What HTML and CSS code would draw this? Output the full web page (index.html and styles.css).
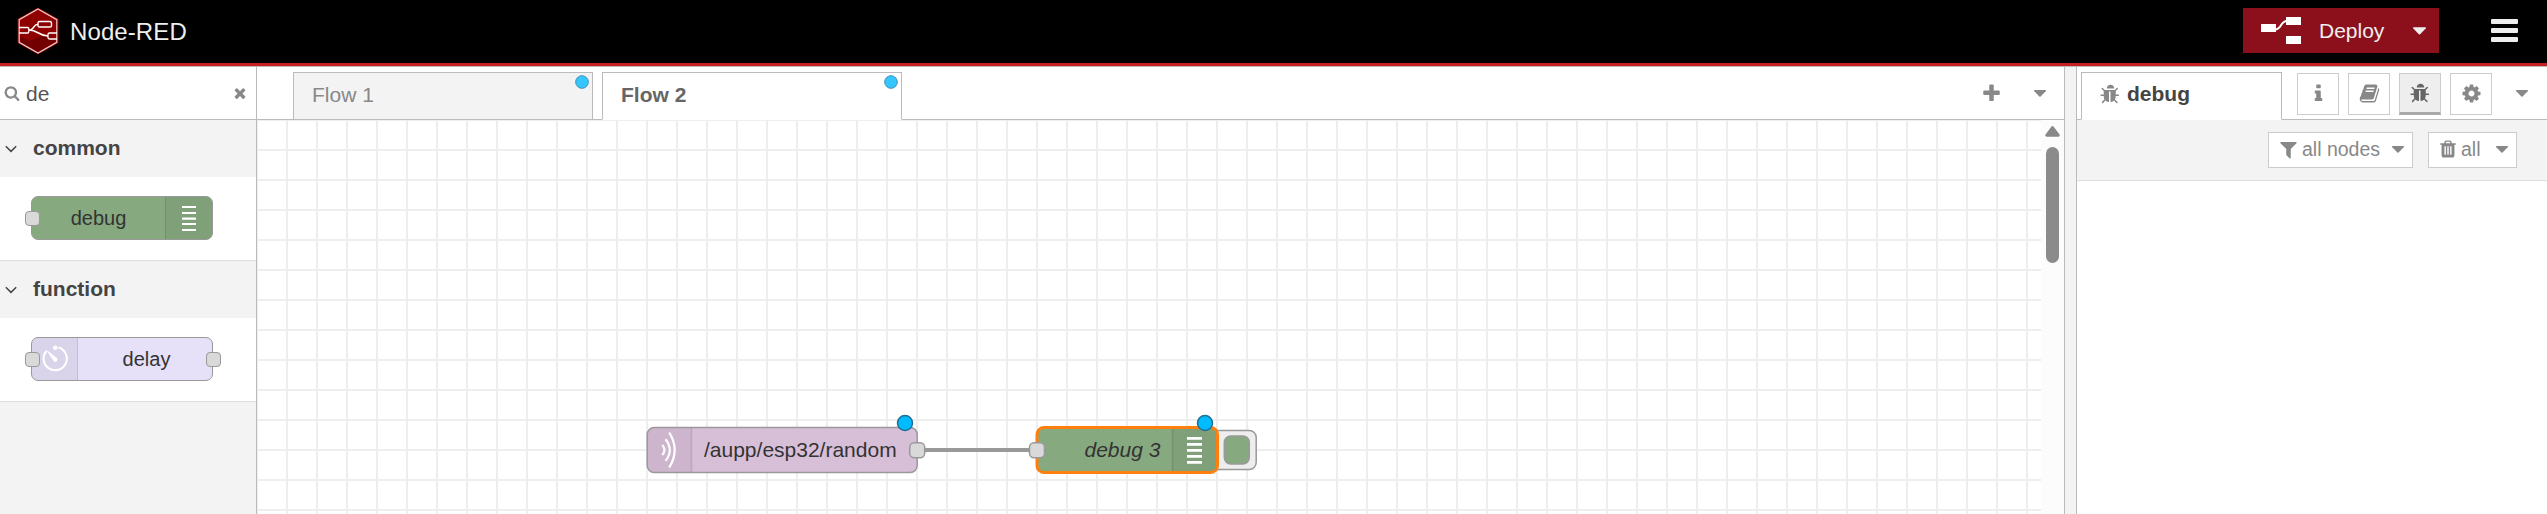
FILE: index.html
```html
<!DOCTYPE html>
<html lang="en">
<head>
<meta charset="utf-8">
<title>Node-RED</title>
<link rel="stylesheet" href="styles.css">
</head>
<body>
<svg class="defs" width="0" height="0">
  <symbol id="bug" viewBox="0 0 1792 1792"><path d="M1632 960q0 26-19 45t-45 19h-224q0 171-67 290l208 209q19 19 19 45t-19 45q-18 19-45 19t-45-19l-198-197q-5 5-15 13t-42 28.500-65 36.500-82 29-97 13v-896h-128v896q-51 0-101.500-13.500t-87-33-66-39-43.500-32.500l-15-14-183 207q-20 21-48 21-24 0-43-16-19-18-20.500-44.500t15.500-46.500l202-227q-58-114-58-274h-224q-26 0-45-19t-19-45 19-45 45-19h224v-294l-173-173q-19-19-19-45t19-45 45-19 45 19l173 173h844l173-173q19-19 45-19t45 19 19 45-19 45l-173 173v294h224q26 0 45 19t19 45zm-416-576h-640q0-133 93.500-226.500t226.500-93.500 226.500 93.500 93.500 226.500z"/></symbol>
  <symbol id="caret" viewBox="0 0 12 7"><path d="M.6 0h10.800q1 .3.300 1.200L6.600 6.500q-.6.500-1.200 0L.3 1.200Q-.4.300.6 0z"/></symbol>
  <symbol id="chevron" viewBox="0 0 12 8"><path d="M.8 1.200 6 6.400l5.200-5.200" fill="none" stroke="currentColor" stroke-width="1.500"/></symbol>
</svg>

<header class="header">
  <div class="brand">
    <svg width="42" height="48" viewBox="0 0 42 48">
      <path d="M21 .5 41.500 12v24L21 47.500.5 36V12z" fill="#8f0000"/>
      <path d="M2 28 12 34 28 28 39 34 21 46 2 35z" fill="#730000"/>
      <g fill="none" stroke="#fff">
        <path d="M21 2 39.800 12.700v22.600L21 46 2.200 35.300V12.700z" stroke-width="1.200" stroke="#eecaca"/>
        <path d="M2 20.500h8.500q1.300 0 1.300 1.300v2.900q0 1.300-1.300 1.300H2M40 26h-7.500q-1.500 0-1.500 1.400v3.200q0 1.400 1.500 1.400H40" stroke-width="1.300"/>
        <rect x="21" y="14.500" width="13.500" height="5.500" rx="1.600" stroke-width="1.400"/>
        <path d="M12 23c6-.3 4-5.700 9-5.700M12 23c9 0 10 6 19 6" stroke-width="1.500"/>
      </g>
    </svg>
    <span>Node-RED</span>
  </div>
  <div class="actions">
    <div class="deploy">
      <svg class="white" width="40" height="27" viewBox="0 0 40 27"><path d="M0 7h15v8H0zM25 0h15v8H25zM25 19h15v8H25z"/><path d="M14 12.500c7 0 5-8.500 12-8.500" fill="none" stroke="#fff" stroke-width="2"/></svg>
      <span>Deploy</span>
      <svg class="caret" width="13" height="8"><use href="#caret"/></svg>
    </div>
    <div class="menu"><i></i><i></i><i></i></div>
  </div>
</header>

<main class="main">
  <aside class="palette">
    <div class="search">
      <svg width="16" height="16" viewBox="0 0 1792 1792"><path d="M1216 832q0-185-131.500-316.500t-316.500-131.500-316.500 131.500-131.500 316.500 131.500 316.500 316.500 131.500 316.500-131.500 131.500-316.500zm512 832q0 52-38 90t-90 38q-54 0-90-38l-343-342q-179 124-399 124-143 0-273.500-55.500t-225-150-150-225-55.500-273.500 55.500-273.500 150-225 225-150 273.500-55.500 273.500 55.500 225 150 150 225 55.500 273.500q0 220-124 399l343 343q37 37 37 90z"/></svg>
      <span>de</span>
      <svg class="clear" width="16" height="16" viewBox="0 0 1792 1792"><path d="M1490 1322q0 40-28 68l-136 136q-28 28-68 28t-68-28l-294-294-294 294q-28 28-68 28t-68-28l-136-136q-28-28-28-68t28-68l294-294-294-294q-28-28-28-68t28-68l136-136q28-28 68-28t68 28l294 294 294-294q28-28 68-28t68 28l136 136q28 28 28 68t-28 68l-294 294 294 294q28 28 28 68z"/></svg>
    </div>
    <section class="category">
      <h3><svg width="12" height="8"><use href="#chevron"/></svg><span>common</span></h3>
      <div class="category-body">
        <div class="node debug">
          <b class="port in"></b>
          <span class="label">debug</span>
          <span class="icon"><svg class="white" width="46" height="42" viewBox="0 0 46 42"><path d="M16 9h14v2H16zM16 15h14v2H16zM16 20.500h14v2.300H16zM16 26h14v2H16zM16 32h14v2H16z"/></svg></span>
        </div>
      </div>
    </section>
    <section class="category">
      <h3><svg width="12" height="8"><use href="#chevron"/></svg><span>function</span></h3>
      <div class="category-body">
        <div class="node delay">
          <b class="port in"></b>
          <span class="icon"><svg width="45" height="42" viewBox="0 0 45 42"><path d="M26.500 9.500A11.600 11.600 0 1 1 14.500 13" fill="none" stroke="#fff" stroke-width="2"/><path d="M14 11.500 25.200 20.200a2.300 2.300 0 0 1-3.400 3z" fill="#fff"/><circle cx="23.300" cy="9.700" r="2.300" fill="#fff"/></svg></span>
          <span class="label">delay</span>
          <b class="port out"></b>
        </div>
      </div>
    </section>
  </aside>

  <section class="workspace">
    <div class="tabs">
      <div class="tab">Flow 1<svg class="changed" width="14" height="14"><circle cx="7" cy="7" r="6.300"/></svg></div>
      <div class="tab active">Flow 2<svg class="changed" width="14" height="14"><circle cx="7" cy="7" r="6.300"/></svg></div>
      <div class="tab-tools">
        <svg width="21" height="21" viewBox="0 0 1792 1792"><path d="M1600 736v192q0 40-28 68t-68 28h-416v416q0 40-28 68t-68 28h-192q-40 0-68-28t-28-68v-416h-416q-40 0-68-28t-28-68v-192q0-40 28-68t68-28h416v-416q0-40 28-68t68-28h192q40 0 68 28t28 68v416h416q40 0 68 28t28 68z"/></svg>
        <svg width="12" height="7"><use href="#caret"/></svg>
      </div>
    </div>
    <div class="canvas-row">
      <svg class="canvas" width="1784" height="394" viewBox="257 120 1784 394">
        <defs><pattern id="grid" x="256" y="119" width="30" height="30" patternUnits="userSpaceOnUse"><path d="M0 0h30v2H2v28H0z" fill="#eee"/></pattern></defs>
        <rect x="257" y="120" width="1784" height="394" fill="url(#grid)"/>
        <path d="M917 450h120" stroke="#999" stroke-width="4"/>
        <g>
          <rect x="647.200" y="427.500" width="270" height="45" rx="7" fill="#d8bfd8"/>
          <path d="M691 428.200h-37a6.500 6.500 0 0 0-6.500 6.500v30.600a6.500 6.500 0 0 0 6.500 6.500h37z" fill="#000" opacity=".05"/>
          <path d="M691.500 428v44" stroke="#000" stroke-opacity=".12" stroke-width="1.500"/>
          <g fill="none" stroke="#fff" stroke-width="2.200"><path d="M662.300 445q4.400 5 0 10M665.500 439.200q8.600 10.800 0 21.600M669.200 432.500q11 17.500 0 35"/></g>
          <rect x="647.200" y="427.500" width="270" height="45" rx="7" fill="none" stroke="#999" stroke-width="1.500"/>
          <text x="704" y="457">/aupp/esp32/random</text>
          <rect class="canvas-port" x="909.700" y="442.700" width="15" height="15" rx="4.500"/>
          <circle class="canvas-changed" cx="905" cy="423" r="7.500"/>
        </g>
        <g>
          <rect x="1205" y="430.500" width="51.200" height="39" rx="7" fill="#eee" stroke="#999" stroke-width="1.500"/>
          <rect x="1224.300" y="436" width="25" height="28" rx="6.500" fill="#87a980" stroke="#999" stroke-width="1.500"/>
          <rect x="1037" y="427.500" width="180.500" height="45" rx="7" fill="#87a980"/>
          <path d="M1172.500 428h38.500a6.500 6.500 0 0 1 6.500 6.500v31a6.500 6.500 0 0 1-6.500 6.500h-38.500z" fill="#000" opacity=".05"/>
          <path d="M1172.500 428v44" stroke="#000" stroke-opacity=".12" stroke-width="1.500"/>
          <path d="M1187 437h15v2.800h-15zM1187 443h15v2.800h-15zM1187 449h15v2.800h-15zM1187 455h15v2.800h-15zM1187 461h15v2.800h-15z" fill="#fff"/>
          <rect x="1037" y="427.500" width="180.500" height="45" rx="7" fill="none" stroke="#ff7f0e" stroke-width="3"/>
          <text x="1084.500" y="457" font-style="italic">debug 3</text>
          <rect class="canvas-port" x="1029.500" y="442.700" width="15" height="15" rx="4.500"/>
          <circle class="canvas-changed" cx="1205" cy="423" r="7.500"/>
        </g>
      </svg>
      <div class="scrollbar">
        <svg width="15" height="11" viewBox="0 0 15 11"><path d="M6.300.7q1.200-1.200 2.400 0l5.800 7.800q.9 2-1.200 2.300H1.700Q-.4 10.500.5 8.500z"/></svg>
        <div class="thumb"></div>
      </div>
    </div>
  </section>

  <div class="separator"></div>

  <aside class="sidebar">
    <div class="sidebar-tabs">
      <div class="sidebar-tab"><svg width="21" height="21"><use href="#bug"/></svg>debug</div>
      <div class="sidebar-buttons">
        <div class="square"><svg width="21" height="21" viewBox="0 0 1792 1792"><path d="M1216 1344v128q0 26-19 45t-45 19h-512q-26 0-45-19t-19-45v-128q0-26 19-45t45-19h64v-384h-64q-26 0-45-19t-19-45v-128q0-26 19-45t45-19h384q26 0 45 19t19 45v576h64q26 0 45 19t19 45zm-128-1152v192q0 26-19 45t-45 19h-256q-26 0-45-19t-19-45v-192q0-26 19-45t45-19h256q26 0 45 19t19 45z"/></svg></div>
        <div class="square"><svg width="21" height="21" viewBox="0 0 1792 1792"><path d="M1703 478q40 57 18 129l-275 906q-19 64-76.500 107.500t-122.500 43.500h-923q-77 0-148.500-53.500t-99.500-131.500q-24-67-2-127 0-4 3-27t4-37q1-8-3-21.500t-3-19.500q2-11 8-21t16.500-23.500 16.500-23.500q23-38 45-91.500t30-91.500q3-10 .5-30t-.5-28q3-11 17-28t17-23q21-36 42-92t25-90q1-9-2.500-32t.5-28q4-13 22-30.500t22-22.500q19-26 42.500-84.500t27.500-96.500q1-8-3-25.500t-2-26.500q2-8 9-18t18-23 17-21q8-12 16.500-30.500t15-35 16-36 19.500-32 26.500-23.500 36-11.500 47.500 5.500l-1 3q38-9 51-9h761q74 0 114 56t18 130l-274 906q-36 119-71.500 153.500t-128.500 34.500h-869q-27 0-38 15-11 16-1 43 24 70 144 70h923q29 0 56-15.500t35-41.500l300-987q7-22 5-57 38 15 59 43zm-1064 2q-4 13 2 22.500t20 9.500h608q13 0 25.500-9.500t16.500-22.500l21-64q4-13-2-22.500t-20-9.500h-608q-13 0-25.500 9.500t-16.500 22.500zm-83 256q-4 13 2 22.500t20 9.500h608q13 0 25.500-9.500t16.500-22.500l21-64q4-13-2-22.500t-20-9.500h-608q-13 0-25.500 9.500t-16.500 22.500z"/></svg></div>
        <div class="square selected"><svg width="21" height="21"><use href="#bug"/></svg></div>
        <div class="square"><svg width="21" height="21" viewBox="0 0 1792 1792"><path d="M1152 896q0-106-75-181t-181-75-181 75-75 181 75 181 181 75 181-75 75-181zm512-109v222q0 12-8 23t-20 13l-185 28q-19 54-39 91 35 50 107 138 10 12 10 25t-9 23q-27 37-99 108t-94 71q-12 0-26-9l-138-108q-44 23-91 38-16 136-29 186-7 28-36 28h-222q-14 0-24.500-8.500t-11.500-21.500l-28-184q-49-16-90-37l-141 107q-10 9-25 9-14 0-25-11-126-114-165-168-7-10-7-23 0-12 8-23 15-21 51-66.500t54-70.500q-27-50-41-99l-183-27q-13-2-21-12.500t-8-23.500v-222q0-12 8-23t19-13l186-28q14-46 39-92-40-57-107-138-10-12-10-24 0-10 9-23 26-36 98.500-107.500t94.500-71.500q13 0 26 10l138 107q44-23 91-38 16-136 29-186 7-28 36-28h222q14 0 24.500 8.500t11.500 21.500l28 184q49 16 90 37l142-107q9-9 24-9 13 0 25 10 129 119 165 170 7 8 7 22 0 12-8 23-15 21-51 66.500t-54 70.500q26 50 41 98l183 28q13 2 21 12.500t8 23.500z"/></svg></div>
        <svg class="more" width="12" height="7"><use href="#caret"/></svg>
      </div>
    </div>
    <div class="toolbar">
      <div class="filter">
        <svg width="21" height="21" viewBox="0 0 1792 1792"><path d="M1595 295q17 41-14 70l-493 493v742q0 42-39 59-13 5-25 5-27 0-45-19l-256-256q-19-19-19-45v-486l-493-493q-31-29-14-70 17-39 59-39h1280q42 0 59 39z"/></svg>
        <span>all nodes</span>
        <svg width="12" height="7"><use href="#caret"/></svg>
      </div>
      <div class="filter clear-log">
        <svg width="20" height="20" viewBox="0 0 1792 1792"><path d="M704 1376v-704q0-14-9-23t-23-9h-64q-14 0-23 9t-9 23v704q0 14 9 23t23 9h64q14 0 23-9t9-23zm256 0v-704q0-14-9-23t-23-9h-64q-14 0-23 9t-9 23v704q0 14 9 23t23 9h64q14 0 23-9t9-23zm256 0v-704q0-14-9-23t-23-9h-64q-14 0-23 9t-9 23v704q0 14 9 23t23 9h64q14 0 23-9t9-23zm-544-992h448l-48-117q-7-9-17-11h-317q-10 2-17 11zm928 32v64q0 14-9 23t-23 9h-96v948q0 83-47 143.500t-113 60.500h-832q-66 0-113-58.500t-47-141.500v-952h-96q-14 0-23-9t-9-23v-64q0-14 9-23t23-9h309l70-167q15-37 54-63t79-26h320q40 0 79 26t54 63l70 167h309q14 0 23 9t9 23z"/></svg>
        <span>all</span>
        <svg width="12" height="7"><use href="#caret"/></svg>
      </div>
    </div>
  </aside>
</main>
</body>
</html>
```

FILE: styles.css
```css
* { box-sizing: border-box; }
html { height: 514px; overflow: hidden; }
body {
  margin: 0;
  height: 514px;
  overflow: hidden;
  display: flex;
  flex-direction: column;
  font-family: "Liberation Sans", Arial, sans-serif;
  font-size: 21px;
  line-height: 24px;
  color: #444;
  background: #fff;
}
svg { display: block; flex: none; fill: #888; }
.white { fill: #fff; }
.defs { position: absolute; }

.header {
  height: 67px;
  flex: none;
  display: flex;
  justify-content: space-between;
  background: #000;
  border-bottom: 1px solid #bbb;
  box-shadow: inset 0 -3px #c7201f;
}
.brand {
  display: flex;
  align-items: center;
  height: 62px;
  padding-left: 17px;
  gap: 11px;
  font-size: 24px;
  letter-spacing: .1px;
  color: #eee;
}
.brand span { padding-top: 2px; }
.actions { display: flex; padding: 8px 29px 0 0; gap: 52px; }
.deploy {
  width: 196px;
  height: 45px;
  display: flex;
  align-items: center;
  padding-left: 18px;
  background: #8c101c;
  color: #eee;
}
.deploy span { margin-left: 18px; width: 97px; }
.deploy .caret { fill: #eee; margin-left: -3px; }
.menu { display: flex; flex-direction: column; gap: 4px; padding-top: 11px; }
.menu i { width: 27px; height: 5px; background: #eee; border-radius: 1px; }

.main { height: 447px; flex: none; display: flex; }

.palette { width: 257px; flex: none; border-right: 1px solid #bbb; background: #f3f3f3; }
.search {
  height: 53px;
  display: flex;
  align-items: center;
  padding: 0 8px 0 4px;
  background: #fff;
  border-bottom: 1px solid #bbb;
  color: #555;
}
.search span { margin: 2px auto 0 6px; }
.category h3 {
  margin: 0;
  height: 57px;
  display: flex;
  align-items: center;
  gap: 16px;
  padding: 0 0 0 5px;
  font-size: 21px;
  color: #444;
}
.category h3 span { padding-bottom: 2px; }
.category-body {
  height: 84px;
  padding: 19px 0 0 31px;
  background: #fff;
  border-bottom: 1px solid #ddd;
}
.node {
  position: relative;
  display: flex;
  width: 182px;
  height: 44px;
  border: 1px solid #999;
  border-radius: 7px;
  font-size: 20px;
  line-height: 42px;
  color: #333;
}
.debug { background: #87a980; }
.delay { background: #e6e0f8; }
.label { flex: 1; text-align: center; }
.icon { background: rgba(0, 0, 0, .05); }
.debug .icon { border-left: 1px solid rgba(0, 0, 0, .1); border-radius: 0 6px 6px 0; }
.delay .icon { border-right: 1px solid rgba(0, 0, 0, .1); border-radius: 6px 0 0 6px; }
.delay .label { padding-left: 3px; }
.port {
  position: absolute;
  top: 14px;
  width: 15px;
  height: 15px;
  background: #d9d9d9;
  border: 1px solid #999;
  border-radius: 4px;
}
.in { left: -7px; }
.out { right: -9px; }

.workspace { width: 1808px; flex: none; display: flex; flex-direction: column; border-right: 1px solid #bbb; }
.tabs {
  height: 53px;
  flex: none;
  display: flex;
  gap: 9px;
  padding: 5px 0 0 36px;
  box-shadow: inset 0 -1px #bbb;
}
.tab {
  position: relative;
  width: 300px;
  height: 48px;
  padding: 10px 18px;
  border: 1px solid #bbb;
  background: #f3f3f3;
  color: #888;
}
.tab.active { border-bottom-color: #fff; background: #fff; color: #666; font-weight: bold; }
.changed { position: absolute; top: 2px; right: 3px; fill: #36c6ff; stroke: #3f8fb5; }
.tab-tools { margin-left: auto; display: flex; align-items: center; gap: 32px; padding: 0 18px 5px 0; }
.canvas-row { height: 394px; display: flex; }
.canvas text { font-family: "Liberation Sans", Arial, sans-serif; font-size: 21px; fill: #333; }
.canvas-port { fill: #d9d9d9; stroke: #999; stroke-width: 1.5px; }
.canvas-changed { fill: #00bcff; stroke: #1f6f94; stroke-width: 1.5px; }
.scrollbar { flex: 1; background: #fcfcfc; padding: 6px 0 0 4px; }
.thumb { margin: 10px 0 0 1px; width: 13px; height: 116px; border-radius: 7px; background: #8b8b8b; }

.separator { width: 11px; flex: none; background: #f3f3f3; }

.sidebar { flex: 1; border-left: 1px solid #bbb; }
.sidebar-tabs { height: 53px; display: flex; padding: 5px 0 0 4px; box-shadow: inset 0 -1px #bbb; }
.sidebar-tab {
  width: 201px;
  height: 48px;
  display: flex;
  align-items: center;
  gap: 6px;
  padding: 0 0 4px 18px;
  background: #fff;
  border: 1px solid #bbb;
  border-bottom-color: #fff;
  font-weight: bold;
}
.sidebar-buttons { display: flex; gap: 9px; padding: 1px 0 0 15px; }
.square {
  width: 42px;
  height: 42px;
  display: flex;
  justify-content: center;
  padding-top: 9px;
  border: 1px solid #ccc;
}
.selected { background: #eee; border-bottom: 3px solid #aaa; }
.selected svg { fill: #666; }
.more { margin: 17px 0 0 15px; }
.toolbar {
  height: 61px;
  display: flex;
  justify-content: flex-end;
  gap: 15px;
  padding: 12px 30px 0 0;
  background: #f3f3f3;
  border-bottom: 1px solid #ddd;
}
.filter {
  width: 145px;
  height: 36px;
  display: flex;
  align-items: center;
  padding: 0 8px 2px 9px;
  background: #fff;
  border: 1px solid #ccc;
  font-size: 19.5px;
  color: #888;
}
.clear-log { width: 89px; }
.filter span { margin: 0 auto 0 3px; white-space: nowrap; }
```
